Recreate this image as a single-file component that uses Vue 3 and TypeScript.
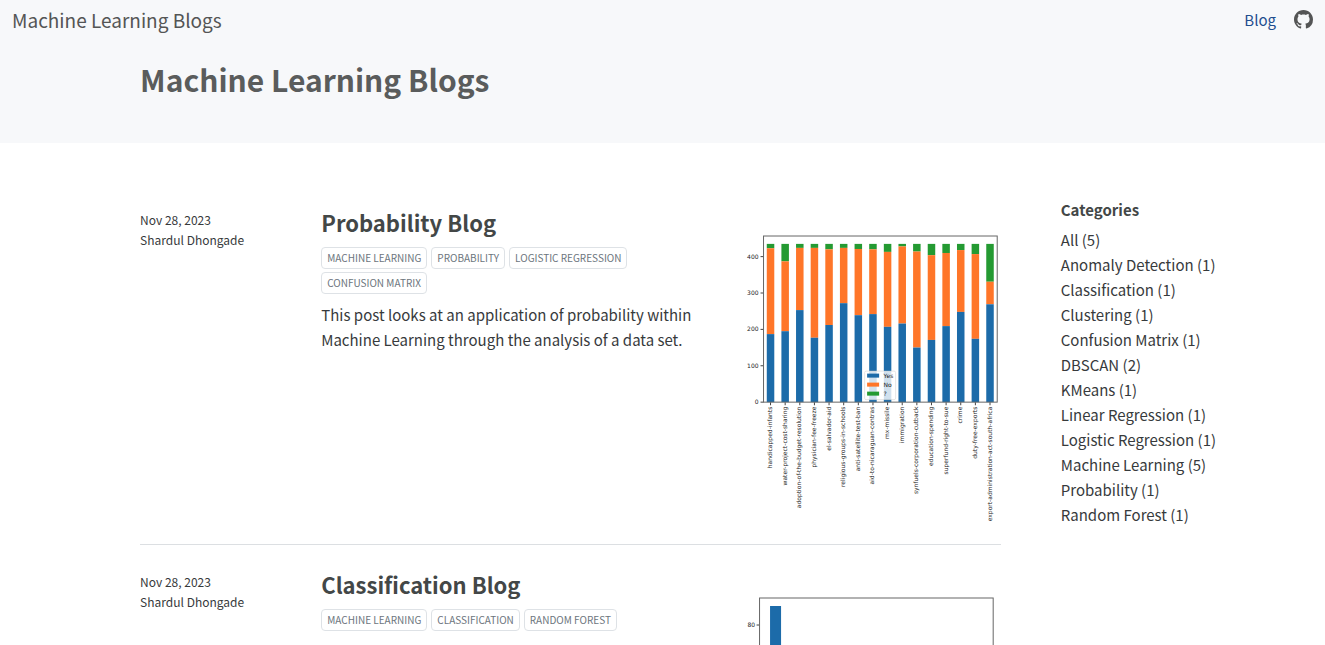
<script setup lang="ts">
interface Vote {
  label: string
  yes: number
  answered: number
}

interface Category {
  name: string
  count: number
}

const votes: Vote[] = [
  { label: 'handicapped-infants', yes: 187, answered: 423 },
  { label: 'water-project-cost-sharing', yes: 195, answered: 387 },
  { label: 'adoption-of-the-budget-resolution', yes: 253, answered: 424 },
  { label: 'physician-fee-freeze', yes: 177, answered: 424 },
  { label: 'el-salvador-aid', yes: 212, answered: 420 },
  { label: 'religious-groups-in-schools', yes: 272, answered: 424 },
  { label: 'anti-satellite-test-ban', yes: 239, answered: 421 },
  { label: 'aid-to-nicaraguan-contras', yes: 242, answered: 420 },
  { label: 'mx-missile', yes: 207, answered: 413 },
  { label: 'immigration', yes: 216, answered: 428 },
  { label: 'synfuels-corporation-cutback', yes: 150, answered: 414 },
  { label: 'education-spending', yes: 171, answered: 404 },
  { label: 'superfund-right-to-sue', yes: 209, answered: 410 },
  { label: 'crime', yes: 248, answered: 418 },
  { label: 'duty-free-exports', yes: 174, answered: 407 },
  { label: 'export-administration-act-south-africa', yes: 269, answered: 331 },
]
const total = 435
const baseline = 344
const unit = 0.727

const yAt = (value: number): number => baseline - value * unit
const xAt = (index: number): number => 67 + index * 29.24

const legend = [
  { name: 'Yes', kind: 'yes' },
  { name: 'No', kind: 'no' },
  { name: '?', kind: 'unknown' },
]

const categories: Category[] = [
  { name: 'All', count: 5 },
  { name: 'Anomaly Detection', count: 1 },
  { name: 'Classification', count: 1 },
  { name: 'Clustering', count: 1 },
  { name: 'Confusion Matrix', count: 1 },
  { name: 'DBSCAN', count: 2 },
  { name: 'KMeans', count: 1 },
  { name: 'Linear Regression', count: 1 },
  { name: 'Logistic Regression', count: 1 },
  { name: 'Machine Learning', count: 5 },
  { name: 'Probability', count: 1 },
  { name: 'Random Forest', count: 1 },
]

const probabilityTags = ['Machine Learning', 'Probability', 'Logistic Regression', 'Confusion Matrix']
const classificationTags = ['Machine Learning', 'Classification', 'Random Forest']
</script>

<template>
  <div class="page">
    <header class="banner">
      <nav class="navbar">
        <a class="brand" href="#">Machine Learning Blogs</a>
        <div class="nav-links">
          <a class="nav-link" href="#">Blog</a>
          <a class="nav-icon" href="#" aria-label="GitHub">
            <svg viewBox="0 0 16 16" aria-hidden="true">
              <path
                d="M8 0C3.58 0 0 3.58 0 8c0 3.54 2.29 6.53 5.47 7.59.4.07.55-.17.55-.38 0-.19-.01-.82-.01-1.49-2.01.37-2.53-.49-2.69-.94-.09-.23-.48-.94-.82-1.13-.28-.15-.68-.52-.01-.53.63-.01 1.08.58 1.23.82.72 1.21 1.87.87 2.33.66.07-.52.28-.87.51-1.07-1.78-.2-3.64-.89-3.64-3.95 0-.87.31-1.59.82-2.15-.08-.2-.36-1.02.08-2.12 0 0 .67-.21 2.2.82.64-.18 1.32-.27 2-.27.68 0 1.36.09 2 .27 1.53-1.04 2.2-.82 2.2-.82.44 1.1.16 1.92.08 2.12.51.56.82 1.27.82 2.15 0 3.07-1.87 3.75-3.65 3.95.29.25.54.73.54 1.48 0 1.07-.01 1.93-.01 2.2 0 .21.15.46.55.38A8.012 8.012 0 0 0 16 8c0-4.42-3.58-8-8-8z"
              />
            </svg>
          </a>
        </div>
      </nav>
      <div class="columns">
        <h1 class="title">Machine Learning Blogs</h1>
      </div>
    </header>

    <div class="columns body">
      <main class="posts">
        <article class="post">
          <div class="meta">
            <div>Nov 28, 2023</div>
            <div>Shardul Dhongade</div>
          </div>
          <div class="summary">
            <h3 class="post-title"><a href="#">Probability Blog</a></h3>
            <div class="tags">
              <a v-for="tag in probabilityTags" :key="tag" class="tag" href="#">{{ tag }}</a>
            </div>
            <p class="excerpt">
              This post looks at an application of probability within Machine Learning through the analysis of a
              data set.
            </p>
          </div>
          <svg class="chart" viewBox="0 0 528 592" role="img" aria-label="Votes by issue">
            <g v-for="(vote, i) in votes" :key="vote.label">
              <rect class="unknown" :x="xAt(i) - 7.5" :y="yAt(total)" width="15" :height="(total - vote.answered) * unit" />
              <rect class="no" :x="xAt(i) - 7.5" :y="yAt(vote.answered)" width="15" :height="(vote.answered - vote.yes) * unit" />
              <rect class="yes" :x="xAt(i) - 7.5" :y="yAt(vote.yes)" width="15" :height="vote.yes * unit" />
              <path class="axis" :d="`M${xAt(i)} 344v6`" />
              <text text-anchor="end" :transform="`translate(${xAt(i) + 3} 353) rotate(-90)`">{{ vote.label }}</text>
            </g>
            <g v-for="tick in [0, 100, 200, 300, 400]" :key="tick">
              <path class="axis" :d="`M47 ${yAt(tick)}h6`" />
              <text x="43" :y="yAt(tick) + 4" text-anchor="end">{{ tick }}</text>
            </g>
            <rect class="frame" x="53" y="12" width="467" height="332" />
            <rect class="legend" x="255" y="282" width="62" height="57" rx="3" />
            <g v-for="(entry, i) in legend" :key="entry.name">
              <rect :class="entry.kind" x="260" :y="287 + i * 18" width="24" height="8" />
              <text x="293" :y="295 + i * 18">{{ entry.name }}</text>
            </g>
          </svg>
        </article>

        <article class="post">
          <div class="meta">
            <div>Nov 28, 2023</div>
            <div>Shardul Dhongade</div>
          </div>
          <div class="summary">
            <h3 class="post-title"><a href="#">Classification Blog</a></h3>
            <div class="tags">
              <a v-for="tag in classificationTags" :key="tag" class="tag" href="#">{{ tag }}</a>
            </div>
          </div>
          <svg class="chart" viewBox="0 0 528 106" role="img" aria-label="Class frequencies">
            <rect class="yes" x="66" y="28" width="22" height="92" />
            <path class="axis" d="M39 66h6" />
            <text x="36" y="70" text-anchor="end">80</text>
            <path class="frame" d="M45 120V12H512V120" />
          </svg>
        </article>
      </main>

      <aside class="sidebar">
        <h5 class="sidebar-title">Categories</h5>
        <ul class="categories">
          <li v-for="category in categories" :key="category.name">
            <a href="#">{{ category.name }} ({{ category.count }})</a>
          </li>
        </ul>
      </aside>
    </div>
  </div>
</template>

<style>
body {
  margin: 0;
  background: #fff;
}
</style>

<style scoped>
.page {
  font-family: "Noto Sans CJK JP", "Noto Sans CJK SC", sans-serif;
  font-size: 15px;
  line-height: 25px;
  color: #373a3c;
}

a {
  color: inherit;
  text-decoration: none;
}

h1,
h3,
h5,
p,
ul {
  margin: 0;
  padding: 0;
}

.banner {
  background: #f7f8fa;
  padding-bottom: 41px;
}

.navbar {
  display: flex;
  align-items: center;
  justify-content: space-between;
  height: 38px;
  padding: 0 12px;
}

.brand {
  font-size: 19px;
  color: #545555;
}

.nav-links {
  display: flex;
  align-items: center;
  gap: 18px;
}

.nav-link {
  color: #1f4e8f;
}

.nav-icon svg {
  display: block;
  width: 19px;
  height: 19px;
  fill: #545555;
}

.columns {
  display: grid;
  grid-template-columns: minmax(0, 140fr) minmax(0, 860fr) 60px minmax(0, 264fr);
}

.title {
  grid-column: 2;
  margin-top: 18px;
  font-size: 30px;
  line-height: 46px;
  color: #5a5c5c;
}

.body {
  padding-top: 54px;
}

.posts {
  grid-column: 2;
}

.sidebar {
  grid-column: 4;
}

.post {
  display: grid;
  grid-template-columns: minmax(0, 151fr) minmax(0, 385fr) minmax(0, 264fr);
  column-gap: 30px;
  align-items: start;
  padding-bottom: 18px;
}

.post + .post {
  border-top: 1px solid #dcdfe2;
  padding-top: 14px;
}

.meta {
  padding-top: 13px;
  font-size: 12px;
  line-height: 20px;
}

.summary {
  padding-top: 10px;
}

.post-title {
  font-size: 22px;
  line-height: 30px;
  color: #434747;
}

.tags {
  display: flex;
  flex-wrap: wrap;
  gap: 3px 4px;
  margin-top: 10px;
}

.tag {
  padding: 0 5px;
  border: 1px solid #dee2e6;
  border-radius: 4px;
  font-size: 10px;
  line-height: 20px;
  color: #6c757d;
  text-transform: uppercase;
}

.excerpt {
  margin-top: 8px;
}

.chart {
  display: block;
  width: 100%;
  margin-top: 33px;
  font-family: "DejaVu Sans", sans-serif;
  font-size: 12px;
  fill: #222;
}

.yes {
  fill: #1c6ba9;
}

.no {
  fill: #ff7629;
}

.unknown {
  fill: #249a32;
}

.axis,
.frame {
  fill: none;
  stroke: #666;
  stroke-width: 2;
}

.axis {
  stroke: #444;
}

.legend {
  fill: #fff;
  fill-opacity: 0.8;
  stroke: #ccc;
}

.sidebar-title {
  font-size: 15px;
  line-height: 25px;
  color: #434747;
}

.categories {
  margin-top: 5px;
  list-style: none;
}
</style>
